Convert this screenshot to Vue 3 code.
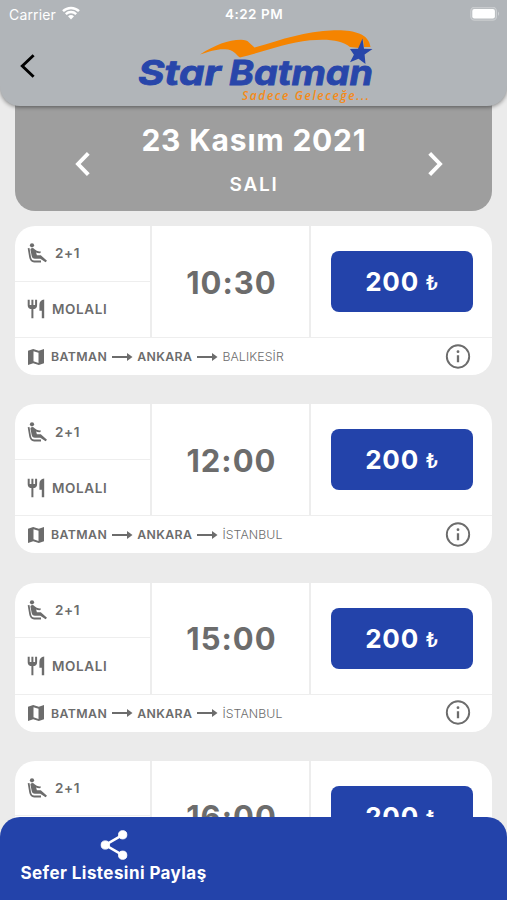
<script setup>
const trips = [
  { time: '10:30', price: 200, to: 'BALIKESİR' },
  { time: '12:00', price: 200, to: 'İSTANBUL' },
  { time: '15:00', price: 200, to: 'İSTANBUL' },
  { time: '16:00', price: 200, to: 'İSTANBUL' },
]
</script>

<template>
  <div class="screen">
    <header class="top">
      <div class="status">
        <div class="carrier">
          <span>Carrier</span>
          <svg width="18" height="14" viewBox="0 0 18 14" fill="none" stroke="#fff">
            <path d="M1 5.2A11.6 11.6 0 0 1 17 5.2" stroke-width="2.5" />
            <path d="M3.8 8.1A7.6 7.6 0 0 1 14.2 8.1" stroke-width="2.4" />
            <path d="M6 10.3A4.5 4.5 0 0 1 12 10.3L9 13.4Z" fill="#fff" stroke="none" />
          </svg>
        </div>
        <span class="clock">4:22 PM</span>
        <svg class="battery" width="31" height="15" viewBox="0 0 31 15">
          <rect x=".7" y=".2" width="25.8" height="13" rx="3.8" fill="#fff" fill-opacity=".12" stroke="#fff" stroke-opacity=".3" stroke-width="1.1" />
          <rect x="2.3" y="1.9" width="22.6" height="9.6" rx="2" fill="#fff" />
          <path d="M28 4.5Q30 6.7 28 8.9Z" fill="#fff" fill-opacity=".4" />
        </svg>
      </div>
      <div class="brand">
        <svg class="back" width="18" height="26" viewBox="0 0 18 26" fill="none" stroke="#000" stroke-width="2.9">
          <path d="M15.6 2.2L4.3 13L15.6 23.8" />
        </svg>
        <svg class="logo" width="242" height="78" viewBox="134 28 242 78">
          <path fill="#f58400" d="M200 54.5C215 45 228 39.8 241 39.8Q247 39.8 249 42.6L254.5 47.6C284 39 304 31.5 334 30.3C352 29.7 369 33 370.5 47L364 47L363 39L359 48L350 47C342 40 328 38.8 310 40.3C286 43 263 52 240 57.6C236 55 234 49.6 225 49.3C216 49 210 51.5 200 54.5Z" />
          <path fill="#2846aa" d="M362.5 38.5L364 48.7L372.5 48.9L364.6 54.6L365.5 64L358.5 58.8L350 62.3L353.9 54.7L350 49L358 48.8Z" />
          <g class="name">
            <text x="138" y="85" textLength="83" lengthAdjust="spacingAndGlyphs">Star</text>
            <text x="229" y="85" textLength="144" lengthAdjust="spacingAndGlyphs">Batman</text>
          </g>
          <text class="slogan" x="242" y="100.3" textLength="127">Sadece Geleceğe...</text>
        </svg>
      </div>
    </header>

    <main class="content">
      <section class="day">
        <svg width="18" height="26" viewBox="0 0 18 26" fill="none" stroke="#fff" stroke-width="3.9">
          <path d="M15.3 2.3L5 13L15.3 23.7" />
        </svg>
        <div class="day-text">
          <div class="date">23 Kasım 2021</div>
          <div class="weekday">SALI</div>
        </div>
        <svg width="18" height="26" viewBox="0 0 18 26" fill="none" stroke="#fff" stroke-width="3.9">
          <path d="M3.7 2.3L14 13L3.7 23.7" />
        </svg>
      </section>

      <article v-for="trip in trips" :key="trip.time" class="card">
        <div class="info">
          <div class="features">
            <div class="feature seats">
              <svg width="20" height="20" viewBox="0 0 20 20" fill="none" stroke="#6c6c6c">
                <circle cx="5" cy="2.3" r="2.1" fill="#6c6c6c" stroke="none" />
                <path d="M1.6 5.2L3.1 14.2Q3.8 18.5 7.2 18.5H14" stroke-width="1.8" />
                <path d="M3.4 6.6Q3.6 5 5.2 5Q6.6 5 7.6 6.3Q9.8 8.8 13.6 8.3V10.1Q11 10.4 9.1 9.5L9.9 12.2H13.8L20 17.8L18.6 19.3L13.3 15.8H7.8Q5.3 15.8 4.7 13Z" fill="#6c6c6c" stroke="none" />
              </svg>
              <span>2+1</span>
            </div>
            <div class="feature meal">
              <svg width="18" height="20" viewBox="0 0 18 20" fill="none" stroke="#6c6c6c">
                <path d="M1.7 .8V6.2Q1.7 9.3 5.4 9.3T9.1 6.2V.8M5.4 .8V19.2" stroke-width="2" />
                <path d="M1.7 6H9.1V7.5Q8 9.5 5.4 9.5T1.7 7.5Z" fill="#6c6c6c" stroke="none" />
                <path d="M17.2 .6V19.2H14.8V11.8H12.4V6Q12.4 1.3 17.2 .6Z" fill="#6c6c6c" stroke="none" />
              </svg>
              <span>MOLALI</span>
            </div>
          </div>
          <div class="time">{{ trip.time }}</div>
          <div class="buy">
            <button class="price"><span>{{ trip.price }}</span><span class="lira">₺</span></button>
          </div>
        </div>
        <div class="route">
          <svg class="map" width="16" height="16" viewBox="0 0 16 16">
            <path fill="#6c6c6c" fill-rule="evenodd" d="M0 1.8L5.2 .1L10.8 1.8L16 0V14.2L10.8 16L5.2 14.2L0 16ZM5.5 2.2V12.3L10.5 14V3.8Z" />
          </svg>
          <b>BATMAN</b>
          <svg class="arrow" width="21" height="10" viewBox="0 0 21 10" fill="none" stroke="#6c6c6c">
            <path d="M0 5H17" stroke-width="1.9" /><path d="M15 1L20.5 5L15 9Z" fill="#6c6c6c" stroke="none" />
          </svg>
          <b>ANKARA</b>
          <svg class="arrow" width="21" height="10" viewBox="0 0 21 10" fill="none" stroke="#6c6c6c">
            <path d="M0 5H17" stroke-width="1.9" /><path d="M15 1L20.5 5L15 9Z" fill="#6c6c6c" stroke="none" />
          </svg>
          <span class="to">{{ trip.to }}</span>
          <svg class="details" width="26" height="26" viewBox="0 0 26 26">
            <circle cx="13" cy="12.5" r="11.2" fill="none" stroke="#6c6c6c" stroke-width="1.9" />
            <path d="M13 11.3V18.3" stroke="#6c6c6c" stroke-width="2.3" />
            <circle cx="13" cy="7.7" r="1.4" fill="#6c6c6c" />
          </svg>
        </div>
      </article>
    </main>

    <footer class="share">
      <div class="share-action">
        <svg width="28" height="30" viewBox="0 0 28 30" fill="#fff" stroke="#fff">
          <path d="M22.7 4.8L5.3 15L22.7 25.2" fill="none" stroke-width="2.6" />
          <circle cx="22.7" cy="4.8" r="4.1" /><circle cx="5.3" cy="15" r="4.1" /><circle cx="22.7" cy="25.2" r="4.1" />
        </svg>
        <span>Sefer Listesini Paylaş</span>
      </div>
    </footer>
  </div>
</template>

<style>
body {
  margin: 0;
  background: #ebebeb;
}
</style>

<style scoped>
.screen {
  width: 507px;
  height: 900px;
  display: flex;
  flex-direction: column;
  overflow: hidden;
  background: #ebebeb;
  color: #6c6c6c;
  font-family: Inter, "Liberation Sans", sans-serif;
}
svg {
  display: block;
  flex: none;
}
.top {
  position: relative;
  z-index: 2;
  flex: none;
  height: 106px;
  border-radius: 0 0 20px 20px;
  background: #b1b5b9;
  box-shadow: 0 1px 4px rgba(0, 0, 0, .45);
}
.status {
  display: grid;
  grid-template-columns: 1fr auto 1fr;
  align-items: center;
  height: 28px;
  padding: 0 6px 0 9px;
  color: #fff;
  font-size: 14px;
  letter-spacing: .15px;
}
.carrier {
  display: flex;
  align-items: center;
  gap: 6px;
}
.carrier svg {
  margin-bottom: 2px;
}
.clock {
  margin-right: 2px;
  font-size: 13.5px;
  font-weight: 600;
  letter-spacing: .5px;
}
.battery {
  justify-self: end;
}
.brand {
  display: flex;
  align-items: center;
  height: 78px;
  padding-left: 18px;
}
.back {
  margin-bottom: 2px;
}
.logo {
  margin-left: 98px;
}
.name {
  fill: #2846aa;
  stroke: #2846aa;
  stroke-width: .8;
  font-size: 34px;
  font-weight: 700;
  font-style: italic;
}
.slogan {
  fill: #f58a18;
  font-family: "Open Sans", sans-serif;
  font-size: 12px;
  font-weight: 600;
  font-style: italic;
}
.content {
  flex: 1;
  min-height: 0;
  overflow: hidden;
  margin-top: -10px;
  padding: 0 15px;
}
.day {
  display: flex;
  justify-content: space-between;
  height: 115px;
  box-sizing: border-box;
  padding: 0 48px 0 58px;
  border-radius: 0 0 20px 20px;
  background: #9e9e9e;
  color: #fff;
}
.day > svg {
  margin-top: 55px;
}
.day-text {
  padding: 25px 9px 0 0;
  text-align: center;
}
.date {
  font-size: 30px;
  line-height: 38px;
  font-weight: 700;
  letter-spacing: .8px;
}
.weekday {
  margin-top: 16px;
  font-size: 19px;
  line-height: 20px;
  font-weight: 600;
  letter-spacing: 1.7px;
}
.card {
  height: 149px;
  margin: 15px 0 29.3px;
  border-radius: 20px;
  overflow: hidden;
  background: #fff;
}
.card + .card {
  margin-top: 0;
}
.info {
  display: grid;
  grid-template-columns: 137px 159px 1fr;
  height: 111px;
  border-bottom: 1px solid #eee;
}
.features {
  display: grid;
  grid-template-rows: 1fr 1fr;
  border-right: 2px solid #ededed;
}
.feature {
  display: flex;
  align-items: center;
  padding-left: 12px;
  font-size: 13.5px;
  font-weight: 600;
  letter-spacing: .6px;
}
.seats {
  gap: 8px;
  border-bottom: 1px solid #eee;
}
.meal {
  gap: 7px;
}
.time {
  display: flex;
  align-items: center;
  justify-content: center;
  border-right: 2px solid #ededed;
  font-size: 31px;
  font-weight: 700;
  letter-spacing: 1px;
  padding: 1px 0 0 2px;
}
.buy {
  display: flex;
  align-items: center;
  padding-left: 20px;
}
.price {
  display: flex;
  align-items: center;
  justify-content: center;
  gap: 7px;
  width: 142px;
  height: 61px;
  padding: 0;
  border: 0;
  border-radius: 8px;
  background: #2343aa;
  color: #fff;
  font: 700 26px Inter, sans-serif;
  letter-spacing: .8px;
}
.lira {
  padding-top: 3px;
  font-family: Roboto, sans-serif;
  font-size: 21px;
  font-weight: 500;
}
.route {
  display: flex;
  align-items: center;
  height: 37px;
  padding: 0 21px 0 13px;
  font-size: 12.3px;
  letter-spacing: .4px;
}
.route b {
  font-weight: 600;
}
.map {
  margin-right: 7px;
}
.arrow {
  margin: 0 4.5px;
}
.to {
  font-weight: 300;
  letter-spacing: .1px;
}
.details {
  margin-left: auto;
}
.share {
  position: relative;
  z-index: 2;
  flex: none;
  display: flex;
  height: 83px;
  margin-top: -20px;
  border-radius: 20px 20px 0 0;
  background: #2343aa;
  color: #fff;
}
.share-action {
  display: flex;
  flex-direction: column;
  align-items: center;
  gap: 2px;
  padding: 13px 0 0 20.5px;
  font-size: 17px;
  line-height: 22px;
  font-weight: 700;
  letter-spacing: .43px;
}
</style>
